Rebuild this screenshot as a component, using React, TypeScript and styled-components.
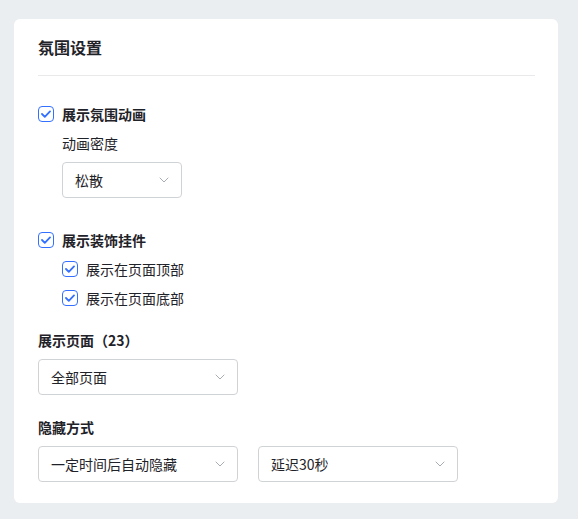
import React, { FC } from 'react'
import styled, { createGlobalStyle } from 'styled-components'

const GlobalStyle = createGlobalStyle`
  html, body {
    margin: 0;
    padding: 0;
    background: #ebeef1;
  }
  body {
    font-family: "Noto Sans CJK SC", "Noto Sans", sans-serif;
    color: #1f2329;
  }
`

const Page = styled.div`
  padding: 19px 20px 17px 14px;
`

const Card = styled.div`
  background: #fff;
  border-radius: 6px;
  padding: 16px 23px 21px 24px;
`

const Header = styled.div`
  font-size: 16px;
  font-weight: 600;
  line-height: 24px;
  padding-bottom: 16px;
  border-bottom: 1px solid #e8e9eb;
  color: #1f2329;
`

const Body = styled.div`
  padding-top: 27px;
  display: flex;
  flex-direction: column;
`

const Group = styled.div<{ $gap?: number }>`
  display: flex;
  flex-direction: column;
  margin-top: ${p => p.$gap ?? 0}px;
`

const Row = styled.label<{ $indent?: boolean; $bold?: boolean }>`
  display: flex;
  align-items: center;
  gap: 8px;
  height: 22px;
  padding-left: ${p => (p.$indent ? 24 : 0)}px;
  font-size: 14px;
  font-weight: ${p => (p.$bold ? 600 : 400)};
  color: #1f2329;
  & + & {
    margin-top: 7px;
  }
`

const Box = styled.span`
  width: 16px;
  height: 16px;
  box-sizing: border-box;
  border: 1.5px solid #3370ff;
  border-radius: 4px;
  background: #fff;
  display: flex;
  align-items: center;
  justify-content: center;
  flex-shrink: 0;
`

const Label = styled.div<{ $bold?: boolean; $indent?: boolean }>`
  font-size: 14px;
  line-height: 22px;
  font-weight: ${p => (p.$bold ? 600 : 400)};
  color: #1f2329;
  padding-left: ${p => (p.$indent ? 24 : 0)}px;
`

const Selects = styled.div<{ $indent?: boolean }>`
  display: flex;
  gap: 20px;
  margin-top: 8px;
  padding-left: ${p => (p.$indent ? 24 : 0)}px;
`

const Select = styled.div<{ $width: number }>`
  width: ${p => p.$width}px;
  height: 36px;
  box-sizing: border-box;
  border: 1px solid #d0d3d6;
  border-radius: 4px;
  display: flex;
  align-items: center;
  justify-content: space-between;
  padding: 0 12px 0 12px;
  font-size: 14px;
  color: #1f2329;
  background: #fff;
`

const Chevron: FC = () => (
  <svg width="10" height="6" viewBox="0 0 10 6" fill="none">
    <path d="M1 1l4 4 4-4" stroke="#a8adb5" strokeWidth="1" strokeLinecap="round" strokeLinejoin="round" />
  </svg>
)

const Check: FC<{ label: string; indent?: boolean; bold?: boolean }> = props => (
  <Row $indent={props.indent} $bold={props.bold}>
    <Box>
      <svg width="10" height="8" viewBox="0 0 10 8" fill="none">
        <path d="M1 4l2.8 2.8L9 1.4" stroke="#3370ff" strokeWidth="1.8" strokeLinecap="round" strokeLinejoin="round" />
      </svg>
    </Box>
    {props.label}
  </Row>
)

const Dropdown: FC<{ value: string; width: number }> = props => (
  <Select $width={props.width}>
    <span>{props.value}</span>
    <Chevron />
  </Select>
)

export default function App() {
  return (
    <Page>
      <GlobalStyle />
      <Card>
        <Header>氛围设置</Header>
        <Body>
          <Group>
            <Check label="展示氛围动画" bold />
            <Label $indent style={{ marginTop: 7 }}>动画密度</Label>
            <Selects $indent>
              <Dropdown value="松散" width={120} />
            </Selects>
          </Group>
          <Group $gap={31}>
            <Check label="展示装饰挂件" bold />
            <Check label="展示在页面顶部" indent />
            <Check label="展示在页面底部" indent />
          </Group>
          <Group $gap={20}>
            <Label $bold>展示页面（23）</Label>
            <Selects>
              <Dropdown value="全部页面" width={200} />
            </Selects>
          </Group>
          <Group $gap={21}>
            <Label $bold>隐藏方式</Label>
            <Selects>
              <Dropdown value="一定时间后自动隐藏" width={200} />
              <Dropdown value="延迟30秒" width={200} />
            </Selects>
          </Group>
        </Body>
      </Card>
    </Page>
  )
}
